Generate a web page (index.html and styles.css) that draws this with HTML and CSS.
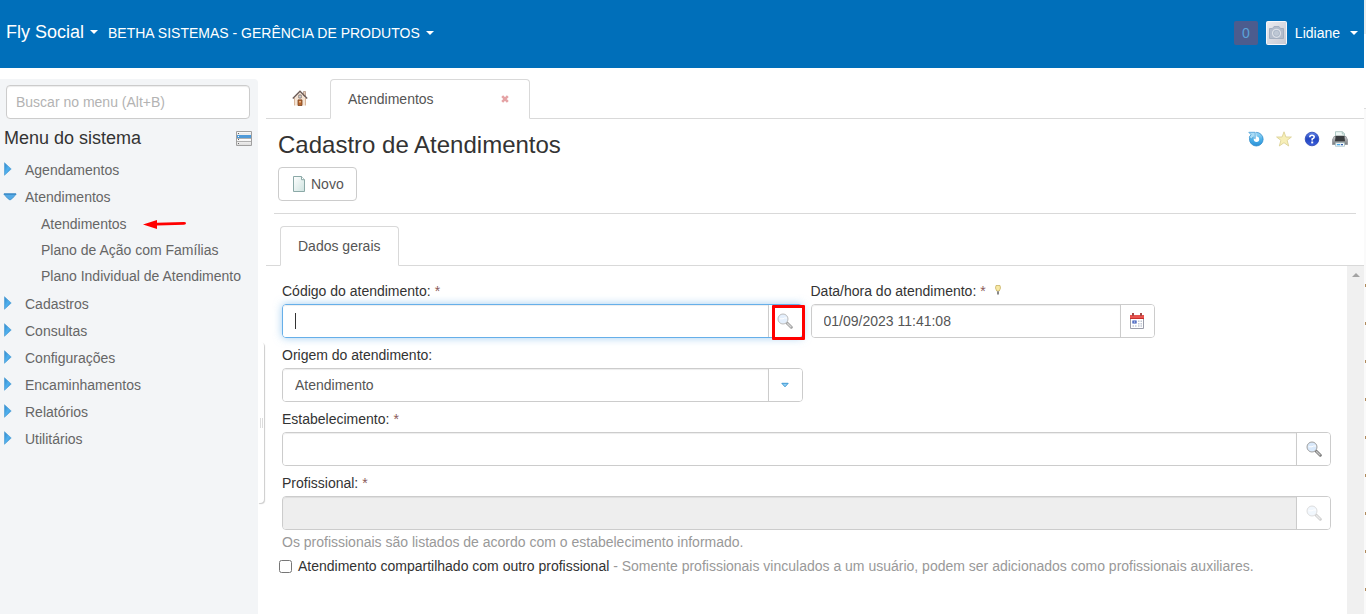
FILE: index.html
```html
<!DOCTYPE html>
<html lang="pt-BR">
<head>
<meta charset="utf-8">
<meta name="viewport" content="width=device-width, initial-scale=1">
<title>Cadastro de Atendimentos - Fly Social</title>
<link rel="stylesheet" href="styles.css">
</head>
<body>
<svg class="defs" aria-hidden="true">
  <defs>
    <linearGradient id="arrow-fill" x1="0" y1="0" x2="1" y2="1"><stop offset="0" stop-color="#2f86c8"/><stop offset=".5" stop-color="#4fb0ee"/><stop offset="1" stop-color="#2a86cc"/></linearGradient>
    <linearGradient id="row-fill" x1="0" y1="0" x2="0" y2="1"><stop offset="0" stop-color="#fff"/><stop offset="1" stop-color="#dedede"/></linearGradient>
    <linearGradient id="page-fill" x1="0" y1="0" x2="1" y2="1"><stop offset="0" stop-color="#fff"/><stop offset="1" stop-color="#cfe3e0"/></linearGradient>
    <linearGradient id="refresh-fill" x1="0" y1="0" x2="0" y2="1"><stop offset="0" stop-color="#a6dcf7"/><stop offset=".5" stop-color="#4db2ea"/><stop offset="1" stop-color="#2a8fd6"/></linearGradient>
    <linearGradient id="help-fill" x1="0" y1="0" x2="0" y2="1"><stop offset="0" stop-color="#5f82e6"/><stop offset=".5" stop-color="#2346c0"/><stop offset="1" stop-color="#3c5fdc"/></linearGradient>
    <linearGradient id="avatar-fill" x1="0" y1="0" x2="1" y2="1"><stop offset="0" stop-color="#ececf0"/><stop offset="1" stop-color="#c6c8d2"/></linearGradient>
    <linearGradient id="print-fill" x1="0" y1="0" x2="0" y2="1"><stop offset="0" stop-color="#c9cbcd"/><stop offset="1" stop-color="#77797c"/></linearGradient>
    <symbol id="i-right" viewBox="0 0 8 14"><path d="M.5.8 7.200 7 .5 13.200z" fill="url(#arrow-fill)" stroke="#5aa5d8" stroke-width=".8"/></symbol>
    <symbol id="i-down" viewBox="0 0 14 8"><path d="M.8 1h12.400L9.500 5.200 7 7 4.500 5.200z" fill="#55aae6" stroke="#4b9bd3"/><path d="M1 1h12" stroke="#2c7fbe"/></symbol>
    <symbol id="i-lens" viewBox="0 0 16 16"><path d="M10 10 14.300 14.200" stroke="#777" stroke-width="3" stroke-linecap="round"/><path d="M10.200 10.200 14.300 14.200" stroke="#c4c4c4" stroke-width="1.300"/><circle cx="6" cy="6" r="5" fill="#d9e9fb" stroke="#a0a0a0" stroke-width="1"/><path d="M2.500 5.800H6L7.500 5h2.500" fill="none" stroke="#fff" stroke-width="1"/></symbol>
  </defs>
</svg>

<header class="topbar">
  <nav class="topbar-left" aria-label="Sistema e entidade">
    <button class="top-link brand" type="button">Fly Social<span class="caret"></span></button>
    <button class="top-link" type="button">BETHA SISTEMAS - GERÊNCIA DE PRODUTOS<span class="caret"></span></button>
  </nav>
  <div class="topbar-right">
    <button class="counter" type="button" aria-label="Notificações">0</button>
    <button class="top-link user" type="button">
      <svg class="avatar" viewBox="0 0 21 24" aria-hidden="true"><rect x=".5" y=".5" width="20" height="23" rx="1" fill="url(#avatar-fill)" stroke="#f5f6fa"/><path d="M3.500 7.500h3l1.500-2h5l1.500 2h3V17.500h-14z" fill="#b3bccb" stroke="#a4afc0"/><circle cx="10.500" cy="12.300" r="4" fill="#a9b5c6" stroke="#dde1e8" stroke-width="1.200"/><circle cx="10.500" cy="12.300" r="2.500" fill="#bec7d4"/></svg>
      Lidiane<span class="caret"></span>
    </button>
  </div>
</header>

<div class="layout">
  <aside class="sidebar">
    <input class="search" type="search" placeholder="Buscar no menu (Alt+B)" aria-label="Buscar no menu">
    <div class="menu-head">
      <h2 class="menu-title">Menu do sistema</h2>
      <button class="icon-button" type="button" aria-label="Alternar menu">
        <svg width="16" height="16" viewBox="0 0 16 16"><path d="M.5 1.500h15v14H.5z" fill="#fff" stroke="#a0a0a0"/><path d="M1 2h14v2.500H1z" fill="url(#row-fill)"/><path d="M1 5h14v3H1z" fill="#4f9ad8"/><path d="M1 9h14v2H1zM1 12h14v3H1z" fill="url(#row-fill)"/><path d="M1 8.500h14M1 11.500h14" stroke="#b0b0b0"/><path d="M2 3h1v1H2zM2 9h1v1H2zM2 13h1v1H2z" fill="#666"/><path d="M2 6h1v1H2z" fill="#fff"/></svg>
      </button>
    </div>
    <nav aria-label="Menu do sistema">
      <ul class="menu">
        <li><a class="menu-item" href="#"><svg class="arrow" aria-hidden="true"><use href="#i-right"/></svg>Agendamentos</a></li>
        <li><a class="menu-item" href="#"><svg class="arrow arrow-open" aria-hidden="true"><use href="#i-down"/></svg>Atendimentos</a>
          <ul class="submenu">
            <li><a class="submenu-item" href="#">Atendimentos<svg class="pointer" viewBox="0 0 43 10" aria-hidden="true"><path d="M0 5.500 14 1v2.800L41 3q2 0 2 1.200T41 5.800L14 6.500V10z" fill="#f00"/></svg></a></li>
            <li><a class="submenu-item" href="#">Plano de Ação com Famílias</a></li>
            <li><a class="submenu-item" href="#">Plano Individual de Atendimento</a></li>
          </ul>
        </li>
        <li><a class="menu-item" href="#"><svg class="arrow" aria-hidden="true"><use href="#i-right"/></svg>Cadastros</a></li>
        <li><a class="menu-item" href="#"><svg class="arrow" aria-hidden="true"><use href="#i-right"/></svg>Consultas</a></li>
        <li><a class="menu-item" href="#"><svg class="arrow" aria-hidden="true"><use href="#i-right"/></svg>Configurações</a></li>
        <li><a class="menu-item" href="#"><svg class="arrow" aria-hidden="true"><use href="#i-right"/></svg>Encaminhamentos</a></li>
        <li><a class="menu-item" href="#"><svg class="arrow" aria-hidden="true"><use href="#i-right"/></svg>Relatórios</a></li>
        <li><a class="menu-item" href="#"><svg class="arrow" aria-hidden="true"><use href="#i-right"/></svg>Utilitários</a></li>
      </ul>
    </nav>
  </aside>
  <div class="gutter"><button class="handle" type="button" aria-label="Recolher menu"><span class="grip"></span></button></div>

  <main class="main">
    <div class="tabs">
      <a class="tab-home" href="#" aria-label="Início">
        <svg width="16" height="16" viewBox="0 0 16 16"><path d="M11.500 1.500h2V6h-2z" fill="#e6cdb8" stroke="#a88a78" stroke-width=".7"/><path d="M3 7.500 8 2.500l5 5V15.500H3z" fill="#f5e4d4"/><path d="M2.500 15.500V8M13.500 15.500V8" stroke="#d9b79c"/><path d="M.8 8.500 8 1.300l7.200 7.200" fill="none" stroke="#6b5a55" stroke-width="1.400"/><path d="M6.800 5h2.400V8H6.800z" fill="#dfeaf5" stroke="#7d6a60" stroke-width=".8"/><path d="M6 9.900h4v5.600H6z" fill="#b8672f" stroke="#7a4422" stroke-width=".8"/><path d="M7 11h2v1.500H7z" fill="#e7b184"/></svg>
      </a>
      <div class="tab-open">
        <a class="tab-label" href="#">Atendimentos</a>
        <button class="icon-button" type="button" aria-label="Fechar aba"><svg width="8" height="8" viewBox="0 0 8 8"><path d="M1.200 1.200 6.800 6.800M6.800 1.200 1.200 6.800" stroke="#e5a3a5" stroke-width="2.600"/></svg></button>
      </div>
    </div>

    <section class="page-head">
      <div class="title-row">
        <h1 class="title">Cadastro de Atendimentos</h1>
        <div class="tools">
          <button class="icon-button" type="button" aria-label="Atualizar"><svg width="16" height="16" viewBox="0 0 16 16"><circle cx="8.300" cy="8.200" r="6.800" fill="url(#refresh-fill)" stroke="#2f8ccb" stroke-width=".8"/><circle cx="8.500" cy="8.200" r="2.700" fill="#fff"/><path d="M7.800 1 8.600 5.500 8 7.500 4.500 6 5 1z" fill="#fff"/><path d="M.8 1.300h6.400v6.500L5.200 5.900 3.600 8 1.200 6.200 3 3.700z" fill="#aadcf6" stroke="#4a9fd6" stroke-width=".8"/></svg></button>
          <button class="icon-button" type="button" aria-label="Favorito"><svg width="16" height="16" viewBox="0 0 16 16"><path d="M8 .8 9.900 6H15.400L11.100 9.300 12.700 15 8 11.700 3.300 15 4.900 9.300.6 6H6.100z" fill="#f7efb8" stroke="#ddd299" stroke-width=".9"/></svg></button>
          <button class="icon-button" type="button" aria-label="Ajuda"><svg width="16" height="16" viewBox="0 0 16 16"><circle cx="8" cy="8" r="6.800" fill="url(#help-fill)" stroke="#2a45b4" stroke-width=".8"/><path d="M5.800 6.200Q5.800 4.200 8 4.200T10.200 6Q10.200 7.200 8.200 8V9.400" fill="none" stroke="#fff" stroke-width="1.600"/><path d="M7.200 10.500h2v1.900h-2z" fill="#fff"/></svg></button>
          <button class="icon-button" type="button" aria-label="Imprimir"><svg width="16" height="16" viewBox="0 0 16 16"><path d="M3.500.7h7L12.500 2.800V6h-9z" fill="#eef7f5" stroke="#9dbdb8" stroke-width=".8"/><path d="M10.300.8v2.200h2.200" fill="none" stroke="#9dbdb8" stroke-width=".8"/><path d="M2 5.500h12L15.600 9v4.500H.4V9z" fill="url(#print-fill)" stroke="#8b8e92" stroke-width=".7"/><path d="M3.600 4.800h8.800l.6 5.400H3z" fill="#3a3c3f"/><path d="M3.500 11.800h9v3.500h-9z" fill="#fff" stroke="#9dbdc4" stroke-width=".7"/><path d="M4.800 13h3.500v1.300H4.800z" fill="#4aa8e8"/><path d="M9 13h2v1.300H9z" fill="#315fae"/></svg></button>
        </div>
      </div>
      <button class="btn" type="button"><svg width="14" height="16" viewBox="0 0 14 16" aria-hidden="true"><path d="M1.500.500h8l3 3.200V15.500h-11z" fill="url(#page-fill)" stroke="#8ba9a7"/><path d="M9.500.500v3.200h3" fill="#fff" stroke="#8ba9a7"/></svg>Novo</button>
    </section>

    <div class="subtabs"><a class="subtab" href="#">Dados gerais</a></div>

    <div class="panel">
      <form class="form">
        <div class="field half">
          <label class="label" for="codigo">Código do atendimento: <span class="required">*</span></label>
          <div class="group focused">
            <input class="control" id="codigo" type="text">
            <span class="text-cursor"></span>
            <button class="addon" type="button" aria-label="Pesquisar atendimento"><svg class="faded" width="16" height="16"><use href="#i-lens"/></svg></button>
            <span class="highlight"></span>
          </div>
        </div>
        <div class="field third">
          <label class="label" for="data">Data/hora do atendimento: <span class="required">*</span>
            <svg class="bulb" width="6" height="10" viewBox="0 0 6 10" aria-hidden="true"><path d="M1 .5h4L5.500 3 4.300 6H1.700L.5 3z" fill="#f8e9a4" stroke="#c9b264" stroke-width=".8"/><path d="M2 6.300h2V9.500H2z" fill="#888"/></svg></label>
          <div class="group">
            <input class="control" id="data" type="text" value="01/09/2023 11:41:08">
            <button class="addon" type="button" aria-label="Abrir calendário"><svg width="16" height="16" viewBox="0 0 16 16"><path d="M1.500 3h13v12.500h-13z" fill="#fff" stroke="#9a9daa"/><path d="M1 2h14v4H1z" fill="#e9534e"/><path d="M1 5h14v1H1z" fill="#c9302c"/><path d="M3 0h2v3H3zM11 0h2v3h-2z" fill="#a34a48"/><path d="M4 8h3v2H4z" fill="#fff" stroke="#2f50b8" stroke-width="1.200"/><path d="M9 7.500h1.500v1.500H9zM11.500 7.500H13v1.500h-1.500zM9 10h1.500v1.500H9zM11.500 10H13v1.500h-1.500zM3.500 12.300H5v1.500H3.500zM6 12.300h1.500v1.500H6zM9 12.300h1.500v1.500H9zM11.500 12.300H13v1.500h-1.500z" fill="#c2c8d4"/></svg></button>
          </div>
        </div>
        <div class="field half own-row">
          <label class="label" for="origem">Origem do atendimento:</label>
          <div class="group">
            <input class="control" id="origem" type="text" value="Atendimento" role="combobox" aria-expanded="false">
            <button class="addon" type="button" aria-label="Abrir opções"><svg width="8" height="6" viewBox="0 0 8 6"><path d="M.8 1.300h6.400L4 4.800z" fill="#8fd0f5" stroke="#3f98d2"/></svg></button>
          </div>
        </div>
        <div class="field full">
          <label class="label" for="estab">Estabelecimento: <span class="required">*</span></label>
          <div class="group">
            <input class="control" id="estab" type="text">
            <button class="addon" type="button" aria-label="Pesquisar estabelecimento"><svg width="16" height="16"><use href="#i-lens"/></svg></button>
          </div>
        </div>
        <div class="field full">
          <label class="label" for="prof">Profissional: <span class="required">*</span></label>
          <div class="group">
            <input class="control" id="prof" type="text" disabled>
            <button class="addon" type="button" disabled aria-label="Pesquisar profissional"><svg class="off" width="16" height="16"><use href="#i-lens"/></svg></button>
          </div>
          <p class="help">Os profissionais são listados de acordo com o estabelecimento informado.</p>
          <div class="check">
            <input class="checkbox" type="checkbox" id="compart">
            <label class="check-label" for="compart">Atendimento compartilhado com outro profissional <span class="muted">- Somente profissionais vinculados a um usuário, podem ser adicionados como profissionais auxiliares.</span></label>
          </div>
        </div>
      </form>
      <div class="scrollbar" aria-hidden="true"><span class="scroll-up"></span></div>
    </div>
  </main>
</div>
</body>
</html>
```

FILE: styles.css
```css
* { box-sizing: border-box; }

body {
  margin: 0;
  min-height: 100vh;
  display: flex;
  flex-direction: column;
  background:
    repeating-linear-gradient(#b08a5c 0 3px, transparent 3px 38px) right 284px / 1px 100% no-repeat,
    linear-gradient(#ececec 34px, #fff 34px 108px, #ddd 108px 109px, #fafafa 109px) right top / 2px 100% no-repeat,
    #fff;
  color: #333;
  font: 14px/20px "Liberation Sans", Arial, sans-serif;
}

button, input { font: inherit; color: inherit; }
button { cursor: pointer; }
a { color: inherit; text-decoration: none; }
ul { list-style: none; margin: 0; padding: 0; }
svg { display: block; flex: none; }

.defs { position: absolute; width: 0; height: 0; }

.icon-button {
  display: flex;
  padding: 0;
  border: 0;
  background: none;
}

/* Top bar */
.topbar {
  display: flex;
  justify-content: space-between;
  align-items: center;
  height: 68px;
  margin-right: 2px;
  padding: 0 6px 2px;
  background: #006fba;
  color: #fff;
}
.topbar-left { display: flex; align-items: baseline; gap: 10px; padding-bottom: 2px; }
.topbar-right { display: flex; align-items: center; gap: 8px; }
.top-link {
  display: flex;
  align-items: center;
  gap: 6px;
  padding: 0;
  border: 0;
  background: none;
}
.brand { font-size: 18px; }
.user { gap: 8px; }
.user .caret { margin-left: 2px; }
.caret {
  border: 4px solid transparent;
  border-top-color: #fff;
  border-bottom: 0;
}
.counter {
  width: 24px;
  height: 24px;
  padding: 0;
  border: 0;
  border-radius: 2px;
  background: #4c5c8e;
  color: #5ba3da;
}
.avatar { width: 21px; height: 24px; }

.layout {
  flex: 1;
  display: flex;
  margin-right: 2px;
  padding-top: 11px;
}

/* Sidebar */
.sidebar {
  width: 258px;
  flex: none;
  padding-top: 6px;
  background: #f3f5f7;
  border-top-right-radius: 4px;
}
.search {
  display: block;
  width: 244px;
  height: 34px;
  margin-left: 6px;
  padding: 6px 9px;
  border: 1px solid #ccc;
  border-radius: 4px;
  background: #fff;
  box-shadow: inset 0 1px 1px rgba(0, 0, 0, .075);
}
.search::placeholder { color: #b3b3b3; opacity: 1; }
.menu-head {
  display: flex;
  align-items: center;
  justify-content: space-between;
  height: 37px;
  padding: 0 6px 0 4px;
}
.menu-title { margin: 0; font-size: 18px; font-weight: 400; }
.menu { color: #666; }
.menu-item {
  display: flex;
  align-items: center;
  height: 27px;
  padding-left: 4px;
}
.arrow { width: 8px; height: 14px; margin: 0 13px 2px 0; }
.arrow-open { width: 14px; height: 8px; margin: 0 8px 0 -1px; }
.submenu { padding: 1px 0; }
.submenu-item {
  display: flex;
  align-items: center;
  height: 26px;
  gap: 16px;
  padding-left: 41px;
}
.pointer { width: 43px; height: 10px; }

.gutter { width: 8px; flex: none; }
.handle {
  display: flex;
  align-items: center;
  justify-content: flex-end;
  width: 6px;
  height: 161px;
  margin-top: 263px;
  padding: 0 1px 0 0;
  border: 0;
  border-radius: 0 4px 4px 0;
  background: #fff;
  box-shadow: 1px 1px 1px #ccc;
}
.grip {
  width: 3px;
  height: 10px;
  border: solid #ddd;
  border-width: 0 1px;
}

/* Main area */
.main { flex: 1; min-width: 0; display: flex; flex-direction: column; }
.tabs {
  display: flex;
  height: 40px;
  box-shadow: inset 0 -1px #d9d9d9;
}
.tab-home {
  display: flex;
  align-items: center;
  justify-content: center;
  width: 64px;
  padding: 0 0 2px 4px;
}
.tab-open {
  display: flex;
  align-items: center;
  justify-content: space-between;
  width: 200px;
  padding: 0 20px 0 17px;
  border: 1px solid #d9d9d9;
  border-bottom-color: #fff;
  border-radius: 4px 4px 0 0;
  background: #fff;
  color: #555;
}

.page-head {
  margin: 0 8px;
  padding: 8px 0 12px 4px;
  border-bottom: 1px solid #d9d9d9;
}
.title-row {
  display: flex;
  justify-content: space-between;
  height: 40px;
}
.title { margin: 0; font-size: 24px; line-height: 36px; font-weight: 400; }
.tools { display: flex; gap: 12px; padding: 4px 8px 0 0; align-items: flex-start; }
.btn {
  display: flex;
  align-items: center;
  gap: 5px;
  height: 34px;
  padding: 0 12px 0 13px;
  border: 1px solid #ccc;
  border-radius: 4px;
  background: #fff;
  color: #555;
}

.subtabs {
  display: flex;
  height: 40px;
  margin-top: 12px;
  padding-left: 14px;
  box-shadow: inset 0 -1px #d9d9d9;
}
.subtab {
  display: flex;
  align-items: center;
  padding: 0 17px;
  border: 1px solid #d9d9d9;
  border-bottom-color: #fff;
  border-radius: 4px 4px 0 0;
  background: #fff;
  color: #555;
}

.panel { flex: 1; display: flex; }
.form {
  flex: 1;
  display: grid;
  grid-template-columns: repeat(12, 1fr);
  align-content: start;
  gap: 7px 8px;
  padding: 15px 16px 0;
}
.half { grid-column: span 6; }
.third { grid-column: span 4; }
.own-row { grid-column: 1 / span 6; }
.full { grid-column: 1 / -1; }
.label {
  display: flex;
  align-items: center;
  gap: 4px;
  margin-bottom: 3px;
}
.required { color: #8b5a5a; }
.bulb { margin: 0 0 2px 5px; }

.group {
  position: relative;
  display: flex;
  height: 34px;
  border: 1px solid #ccc;
  border-radius: 4px;
}
.focused { border-color: #66afe9; box-shadow: 0 0 8px rgba(102, 175, 233, .6); }
.control {
  flex: 1;
  min-width: 0;
  padding: 0 12px;
  border: 0;
  border-radius: 3px 0 0 3px;
  outline: 0;
  background: #fff;
  box-shadow: inset 0 1px 1px rgba(0, 0, 0, .075);
  color: #555;
}
.control:disabled { background: #eee; }
.text-cursor {
  position: absolute;
  top: 8px;
  left: 12px;
  width: 1px;
  height: 16px;
  background: #333;
  pointer-events: none;
}
.addon {
  display: flex;
  align-items: center;
  justify-content: center;
  width: 34px;
  padding: 0;
  border: 0;
  border-left: 1px solid #ccc;
  border-radius: 0 3px 3px 0;
  background: #fff;
}
.faded { opacity: .7; }
.off { opacity: .35; }
.highlight {
  position: absolute;
  top: 0;
  right: -3px;
  width: 33px;
  height: 35px;
  border: 3px solid #f00;
  border-radius: 1px;
  pointer-events: none;
}

.help { margin: 2px 0 4px; color: #999; }
.check { display: flex; align-items: center; }
.checkbox { width: 13px; height: 13px; margin: 0 6px 0 -3px; }
.muted { color: #999; }

.scrollbar {
  display: flex;
  justify-content: center;
  width: 17px;
  padding-top: 7px;
  background: #f0f0f0;
}
.scroll-up {
  height: 4px;
  border: 4px solid transparent;
  border-top: 0;
  border-bottom-color: #a3a3a3;
}
```
